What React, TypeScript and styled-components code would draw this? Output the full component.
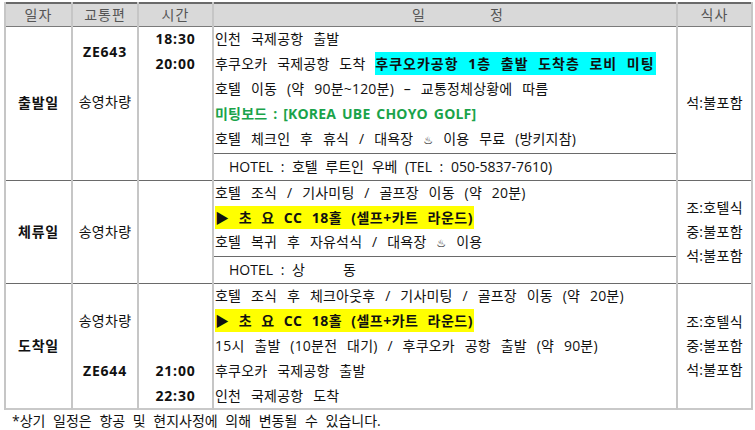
import { createGlobalStyle, styled } from "styled-components";

const GlobalStyle = createGlobalStyle`
  html, body { margin: 0; padding: 0; background: #fff; }
  body {
    font-family: "Open Sans", "Noto Sans CJK KR", "DejaVu Sans", sans-serif;
    font-size: 14px;
    color: #111;
  }
`;

const Page = styled.div`
  width: 755px;
  height: 430px;
  padding: 2px 0 0 4px;
  box-sizing: border-box;
  overflow: hidden;
`;

const Table = styled.table`
  width: 747px;
  border-collapse: collapse;
  table-layout: fixed;
  border-top: 2px solid #6a6a6a;
  border-bottom: 2px solid #c9c9c9;
`;

const Head = styled.th`
  height: 22px;
  padding: 0;
  background: #d9d9d9;
  color: #555;
  font-weight: normal;
  border-left: 2px solid #c6c6c6;
  border-right: 2px solid #c6c6c6;
  border-bottom: 1px solid #7a7a7a;
  line-height: 22px;
  letter-spacing: 1px;
`;

const Spread = styled.span`
  display: inline-flex;
  gap: 64px;
  margin-left: 26px;
`;

const Row = styled.tr<{ $first?: boolean; $tall?: boolean }>`
  height: ${(p) => (p.$tall ? 27 : 25)}px;
  border-top: ${(p) => (p.$first ? "1px solid #6a6a6a" : "none")};
`;

const Cell = styled.td<{ $bold?: boolean }>`
  padding: 0;
  text-align: center;
  vertical-align: middle;
  border-left: 2px solid #c6c6c6;
  border-right: 2px solid #c6c6c6;
  font-weight: ${(p) => (p.$bold ? 700 : 400)};
  letter-spacing: ${(p) => (p.$bold ? 0.8 : 0.3)}px;
  line-height: 24px;
  white-space: nowrap;
`;

const Plan = styled.td<{ $hotel?: boolean }>`
  padding: 0 0 0 ${(p) => (p.$hotel ? 15 : 1)}px;
  text-align: left;
  white-space: pre;
  word-spacing: ${(p) => (p.$hotel ? 4 : 6)}px;
  letter-spacing: ${(p) => (p.$hotel ? 0 : 0.2)}px;
  line-height: 24px;
  border-left: 2px solid #c6c6c6;
  border-right: 2px solid #c6c6c6;
  border-top: ${(p) => (p.$hotel ? "1px solid #6a6a6a" : "none")};
`;

const Mark = styled.span<{ $tone: "cyan" | "yellow" }>`
  background: ${(p) => (p.$tone === "cyan" ? "#00ffff" : "#ffff00")};
  font-weight: 700;
  display: inline-block;
  line-height: 23px;
  word-spacing: 5px;
  letter-spacing: ${(p) => (p.$tone === "cyan" ? 1 : 0.5)}px;
  padding-right: 1px;
`;

const Green = styled.span`
  color: #1aa34a;
  font-weight: 700;
  letter-spacing: 0.2px;
  word-spacing: 2px;
`;

const Meals = styled.div`
  line-height: 24px;
`;

const Note = styled.div`
  margin: 2px 0 0 8px;
  line-height: 18px;
  word-spacing: 4px;
`;

const Spa = styled.span`
  font-family: "DejaVu Sans", sans-serif;
  font-size: 11px;
  font-weight: 700;
  color: #000;
`;

export default function App() {
  return (
    <Page>
      <GlobalStyle />
      <Table>
        <colgroup>
          <col style={{ width: 67 }} />
          <col style={{ width: 66 }} />
          <col style={{ width: 75 }} />
          <col style={{ width: 464 }} />
          <col style={{ width: 75 }} />
        </colgroup>
        <thead>
          <tr>
            <Head>일자</Head>
            <Head>교통편</Head>
            <Head>시간</Head>
            <Head>
              <Spread>
                <span>일</span>
                <span>정</span>
              </Spread>
            </Head>
            <Head>식사</Head>
          </tr>
        </thead>
        <tbody>
          {/* 출발일 */}
          <Row $first>
            <Cell rowSpan={6} $bold>출발일</Cell>
            <Cell rowSpan={2} $bold>ZE643</Cell>
            <Cell $bold>18:30</Cell>
            <Plan>인천 국제공항 출발</Plan>
            <Cell rowSpan={6}>석:불포함</Cell>
          </Row>
          <Row>
            <Cell $bold>20:00</Cell>
            <Plan>
              후쿠오카 국제공항 도착 <Mark $tone="cyan">후쿠오카공항 1층 출발 도착층 로비 미팅</Mark>
            </Plan>
          </Row>
          <Row>
            <Cell rowSpan={2}>송영차량</Cell>
            <Cell rowSpan={4} />
            <Plan>호텔 이동 (약 90분~120분) – 교통정체상황에 따름</Plan>
          </Row>
          <Row>
            <Plan>
              <Green>미팅보드 : [KOREA UBE CHOYO GOLF]</Green>
            </Plan>
          </Row>
          <Row>
            <Cell rowSpan={2} />
            <Plan>
              호텔 체크인 후 휴식 / 대욕장 <Spa>♨</Spa> 이용 무료 (방키지참)
            </Plan>
          </Row>
          <Row $tall>
            <Plan $hotel>HOTEL : 호텔 루트인 우베 (TEL : 050-5837-7610)</Plan>
          </Row>

          {/* 체류일 */}
          <Row $first>
            <Cell rowSpan={4} $bold>체류일</Cell>
            <Cell rowSpan={4}>송영차량</Cell>
            <Cell rowSpan={4} />
            <Plan>호텔 조식 / 기사미팅 / 골프장 이동 (약 20분)</Plan>
            <Cell rowSpan={4}>
              <Meals>
                조:호텔식
                <br />
                중:불포함
                <br />
                석:불포함
              </Meals>
            </Cell>
          </Row>
          <Row>
            <Plan>
              <Mark $tone="yellow">▶ 초 요 CC 18홀 (셀프+카트 라운드)</Mark>
            </Plan>
          </Row>
          <Row>
            <Plan>
              호텔 복귀 후 자유석식 / 대욕장 <Spa>♨</Spa> 이용
            </Plan>
          </Row>
          <Row $tall>
            <Plan $hotel>HOTEL : 상     동</Plan>
          </Row>

          {/* 도착일 */}
          <Row $first>
            <Cell rowSpan={5} $bold>도착일</Cell>
            <Cell rowSpan={3}>송영차량</Cell>
            <Cell rowSpan={3} />
            <Plan>호텔 조식 후 체크아웃후 / 기사미팅 / 골프장 이동 (약 20분)</Plan>
            <Cell rowSpan={5}>
              <Meals>
                조:호텔식
                <br />
                중:불포함
                <br />
                석:불포함
              </Meals>
            </Cell>
          </Row>
          <Row>
            <Plan>
              <Mark $tone="yellow">▶ 초 요 CC 18홀 (셀프+카트 라운드)</Mark>
            </Plan>
          </Row>
          <Row>
            <Plan>15시 출발 (10분전 대기) / 후쿠오카 공항 출발 (약 90분)</Plan>
          </Row>
          <Row>
            <Cell $bold>ZE644</Cell>
            <Cell $bold>21:00</Cell>
            <Plan>후쿠오카 국제공항 출발</Plan>
          </Row>
          <Row>
            <Cell />
            <Cell $bold>22:30</Cell>
            <Plan>인천 국제공항 도착</Plan>
          </Row>
        </tbody>
      </Table>
      <Note>*상기 일정은 항공 및 현지사정에 의해 변동될 수 있습니다.</Note>
    </Page>
  );
}
